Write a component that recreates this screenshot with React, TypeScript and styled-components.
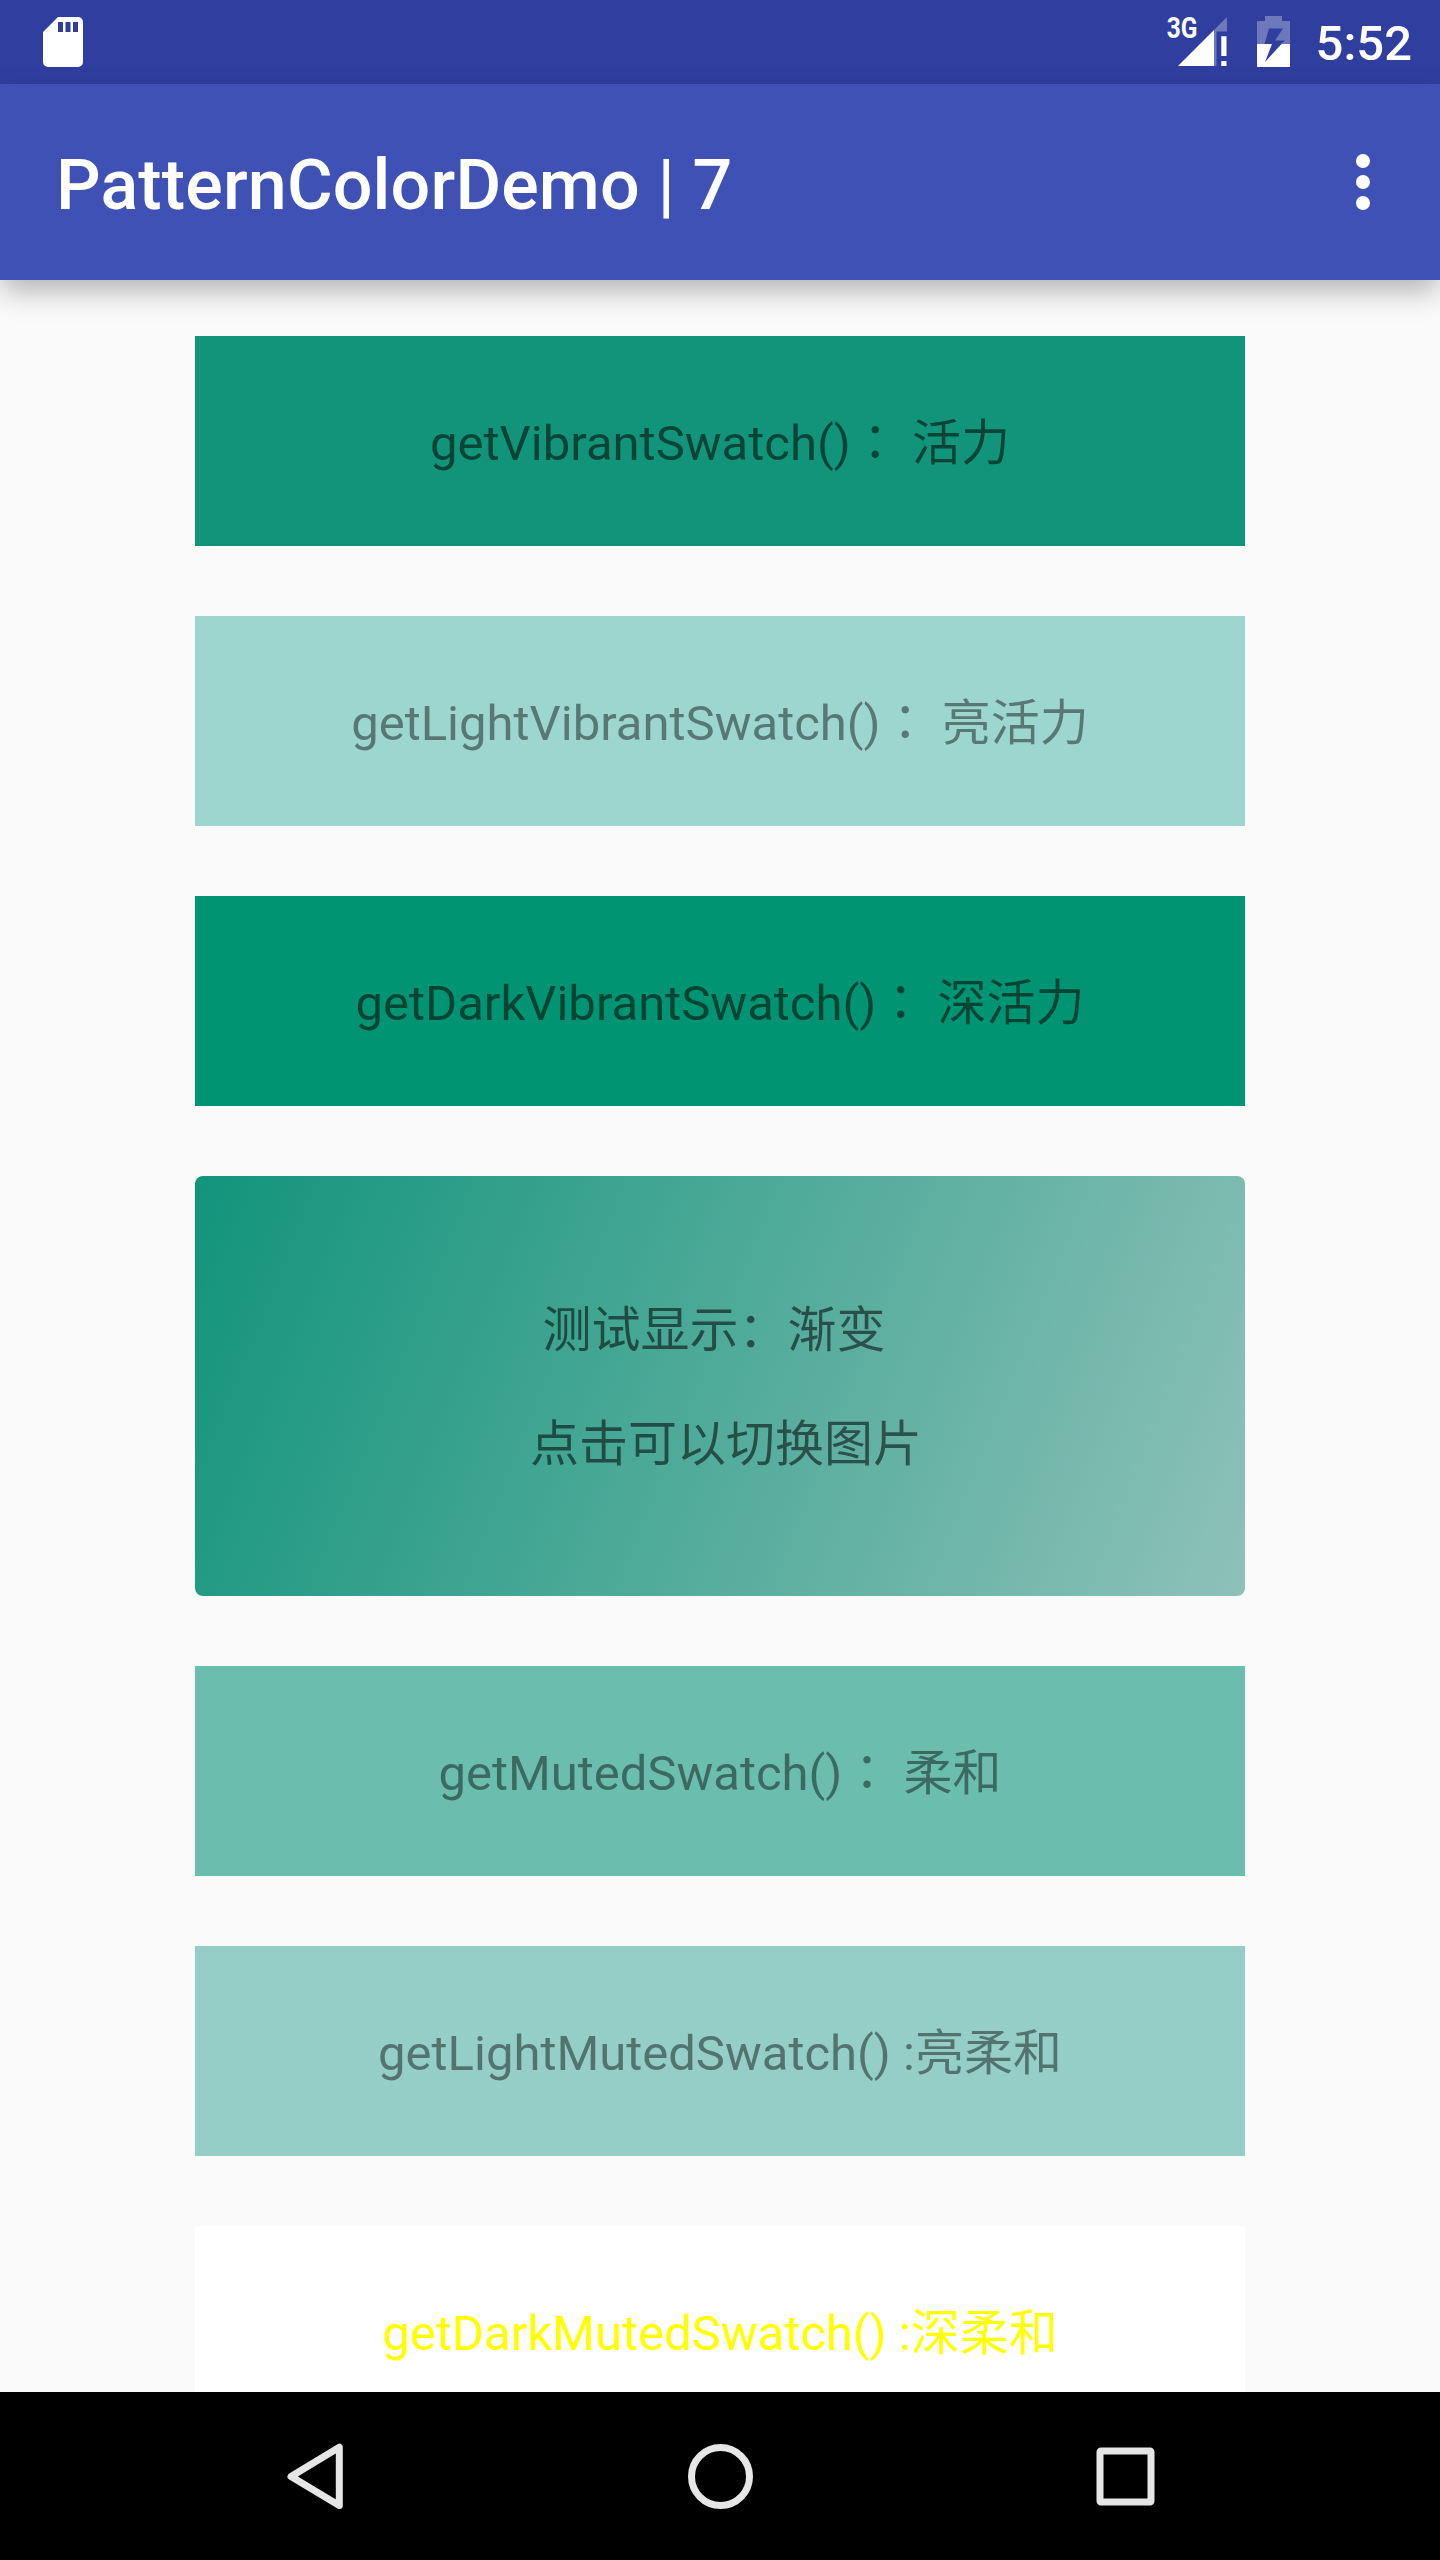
import React from "react";
import styled, { createGlobalStyle } from "styled-components";

const GlobalStyle = createGlobalStyle`
  * { box-sizing: border-box; }
  body { margin: 0; background: #fafafa; }
`;

const Screen = styled.div`
  display: flex;
  flex-direction: column;
  width: 1440px;
  height: 2560px;
  overflow: hidden;
  background: #fafafa;
  font-family: Roboto, "Noto Sans CJK SC", sans-serif;
`;

const StatusBar = styled.header`
  flex: none;
  display: flex;
  align-items: center;
  justify-content: space-between;
  height: 84px;
  padding: 0 28px 0 43px;
  background: #303f9f;
  color: #fff;
`;

const StatusGroup = styled.div`
  display: flex;
  align-items: flex-start;
  height: 84px;
  padding-top: 15px;
`;

const Network = styled.div`
  display: flex;
  align-items: flex-start;
  margin: 2px 30px 0 0;
`;

const NetworkType = styled.span`
  width: 33px;
  margin: -3px -21px 0 0;
  font: 700 29.5px/29px Roboto, sans-serif;
  transform: translateX(0.7px) scaleX(0.83);
  transform-origin: left;
`;

const Clock = styled.span`
  margin-left: 26px;
  font: 500 49px/58px Roboto, sans-serif;
`;

const AppBar = styled.div`
  flex: none;
  display: flex;
  align-items: center;
  justify-content: space-between;
  height: 196px;
  padding: 0 70px 0 56px;
  background: #3f51b5;
  box-shadow: 0 12px 28px -2px rgba(0, 0, 0, 0.3);
  color: #fff;
`;

const Title = styled.h1`
  margin: 6px 0 0;
  font: 500 70px/82px Roboto, sans-serif;
  letter-spacing: 0.15px;
`;

const MenuButton = styled.button`
  display: flex;
  flex-direction: column;
  gap: 7px;
  padding: 0;
  border: 0;
  background: none;
`;

const Dot = styled.i`
  width: 14px;
  height: 14px;
  border-radius: 50%;
  background: #fff;
`;

const Content = styled.main`
  flex: 1;
  min-height: 0;
  display: flex;
  flex-direction: column;
  align-items: center;
  gap: 70px;
  padding-top: 56px;
  overflow: hidden;
`;

const Swatch = styled.div<{ $color: string; $text?: string }>`
  flex: none;
  display: flex;
  align-items: center;
  justify-content: center;
  width: 1050px;
  height: 210px;
  padding-top: 5px;
  background: ${(p) => p.$color};
  color: ${(p) => p.$text ?? "rgba(0, 0, 0, 0.54)"};
  font-size: 49px;
  line-height: 57px;
  white-space: pre;
`;

/* Centred full-width colon; the zero line height keeps the row's baseline in place. */
const Colon = styled.span`
  font-family: "Noto Sans CJK JP", sans-serif;
  line-height: 0;
`;

const GradientCard = styled(Swatch)`
  height: 420px;
  padding-top: 3px;
  border-radius: 8px;
  text-align: center;
`;

const NavBar = styled.nav`
  flex: none;
  display: flex;
  align-items: center;
  justify-content: center;
  gap: 321px;
  height: 168px;
  background: #000;
`;

const NavIcon = styled.svg`
  width: 84px;
  height: 84px;
  fill: none;
  stroke: #e6e6e6;
  stroke-width: 7;
  stroke-linejoin: round;
`;

const swatchesAbove = [
  { label: "getVibrantSwatch()： 活力", color: "#12947b" },
  { label: "getLightVibrantSwatch()： 亮活力", color: "#9dd6ce", text: "rgba(0, 0, 0, 0.44)" },
  { label: "getDarkVibrantSwatch()： 深活力", color: "#009472" },
];

const swatchesBelow = [
  { label: "getMutedSwatch()： 柔和", color: "#6bbdae", text: "rgba(0, 0, 0, 0.44)" },
  { label: "getLightMutedSwatch() :亮柔和", color: "#94cec6", text: "rgba(0, 0, 0, 0.44)" },
  { label: "getDarkMutedSwatch() :深柔和", color: "#ffffff", text: "#ffff00" },
];

function SwatchLabel({ children }: { children: string }) {
  const [name, meaning] = children.split("：");
  return (
    <span>
      {name}
      {meaning !== undefined && <Colon>：</Colon>}
      {meaning}
    </span>
  );
}

function SdCard() {
  return (
    <svg width="40" height="50" viewBox="0 0 40 50">
      <path
        fill="#fff"
        fillRule="evenodd"
        d="M15 0H35a5 5 0 0 1 5 5V45a5 5 0 0 1-5 5H5a5 5 0 0 1-5-5V15ZM15 5V15H20V5ZM22.500 5V15H27.500V5ZM30 5V15H35V5Z"
      />
    </svg>
  );
}

function Signal() {
  return (
    <svg width="49" height="49" viewBox="0 0 49 49">
      <path fill="#fff" fillOpacity=".3" d="M36 13 49 0V14.500H38.500V49H36Z" />
      <path fill="#fff" d="M0 49 36 13V49ZM43.300 19.300H48.500V39H43.300ZM43.300 44H48.500V49H43.300Z" />
    </svg>
  );
}

const BatteryIcon = styled.svg`
  margin-top: 1px;
`;

function Battery() {
  return (
    <BatteryIcon width="33" height="51" viewBox="0 0 33 51">
      <path
        fill="#fff"
        fillOpacity=".3"
        d="M8 0H25V5H33V28H24L28 24.500H18L26 12.500H12L7.500 28H0V5H8Z"
      />
      <path fill="#fff" d="M0 28H15L8 46 24.500 28H33V51H0Z" />
    </BatteryIcon>
  );
}

export default function App() {
  return (
    <Screen>
      <GlobalStyle />
      <StatusBar>
        <SdCard />
        <StatusGroup>
          <Network>
            <NetworkType>3G</NetworkType>
            <Signal />
          </Network>
          <Battery />
          <Clock>5:52</Clock>
        </StatusGroup>
      </StatusBar>
      <AppBar>
        <Title>PatternColorDemo | 7</Title>
        <MenuButton aria-label="menu">
          <Dot />
          <Dot />
          <Dot />
        </MenuButton>
      </AppBar>
      <Content>
        {swatchesAbove.map((s) => (
          <Swatch key={s.label} $color={s.color} $text={s.text}>
            <SwatchLabel>{s.label}</SwatchLabel>
          </Swatch>
        ))}
        <GradientCard $color="linear-gradient(111.8deg, #12947b, #8ec1b9)">
          {"测试显示：渐变 \n\n 点击可以切换图片"}
        </GradientCard>
        {swatchesBelow.map((s) => (
          <Swatch key={s.label} $color={s.color} $text={s.text}>
            <SwatchLabel>{s.label}</SwatchLabel>
          </Swatch>
        ))}
      </Content>
      <NavBar>
        <NavIcon viewBox="0 0 84 84">
          <path d="M18 42.500 66.300 13.300V71.500Z" />
        </NavIcon>
        <NavIcon viewBox="0 0 84 84">
          <circle cx="42.500" cy="42.500" r="29" />
        </NavIcon>
        <NavIcon viewBox="0 0 84 84">
          <rect x="17" y="17" width="51" height="51" rx="1" />
        </NavIcon>
      </NavBar>
    </Screen>
  );
}
